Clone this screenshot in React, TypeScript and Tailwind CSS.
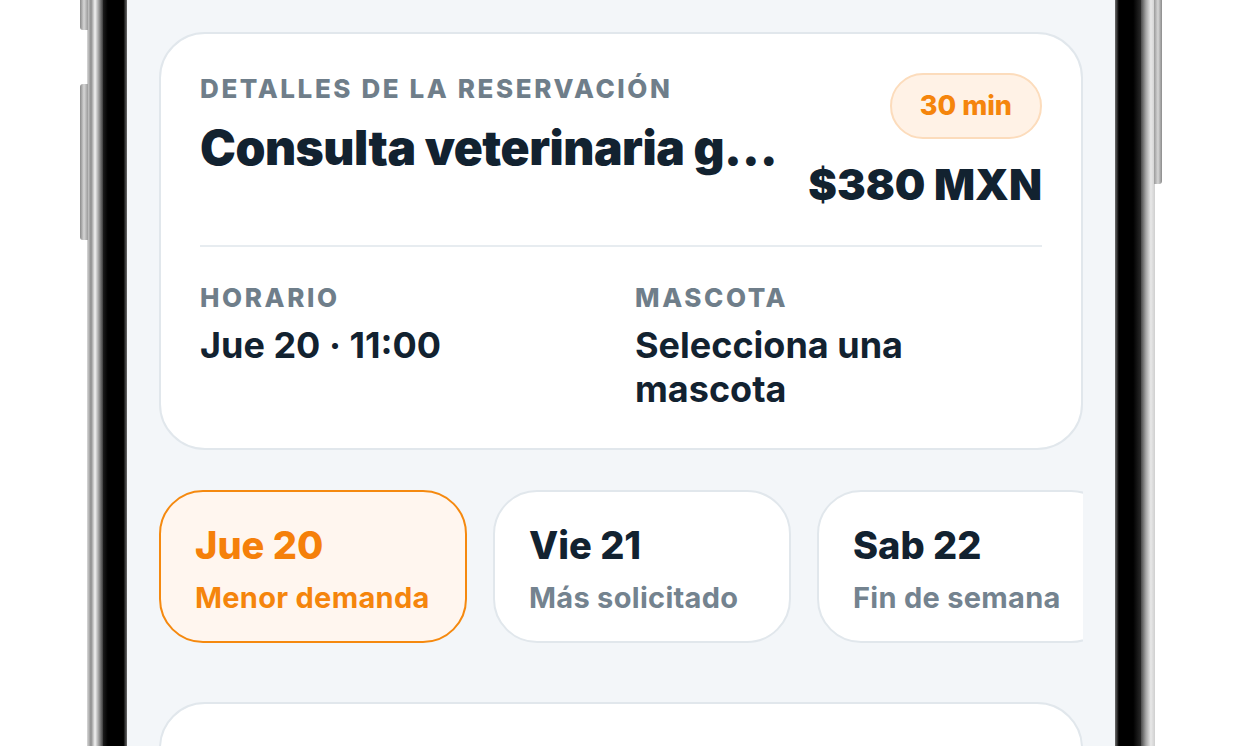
import React from 'react';

const days = [
  { day: 'Jue 20', note: 'Menor demanda', active: true, width: 'w-[308px]' },
  { day: 'Vie 21', note: 'Más solicitado', active: false, width: 'w-[298px]' },
  { day: 'Sab 22', note: 'Fin de semana', active: false, width: 'w-[298px]' },
];

const App = () => {
  return (
    <div className="h-[746px] w-[1242px] overflow-hidden bg-white font-['Inter',sans-serif]">
      <div className="relative ml-[87px] flex h-full w-[1068px]">
        {/* side buttons */}
        <div className="absolute -left-[7px] -top-4 h-[46px] w-[8px] rounded-l-[3px] bg-[linear-gradient(90deg,#8a8a8a,#d6d6d6,#9b9b9b)]" />
        <div className="absolute -left-[7px] top-[84px] h-[156px] w-[8px] rounded-l-[3px] bg-[linear-gradient(90deg,#8a8a8a,#d6d6d6,#9b9b9b)]" />
        <div className="absolute -right-[7px] -top-4 h-[200px] w-[8px] rounded-r-[3px] bg-[linear-gradient(90deg,#9b9b9b,#d6d6d6,#8a8a8a)]" />

        {/* frame left */}
        <div className="w-[16px] shrink-0 bg-[linear-gradient(90deg,#d9d9d9,#8c8c8c_25%,#f2f2f2_50%,#9a9a9a_75%,#3c3c3c)]" />
        <div className="w-[24px] shrink-0 bg-[linear-gradient(90deg,#1c1c1c,#000_20%,#000_85%,#6d6d6d)]" />

        {/* screen */}
        <div className="flex w-[988px] shrink-0 flex-col bg-[#f3f6f9] px-8 pt-8">
          {/* reservation card */}
          <div className="shrink-0 rounded-[46px] border-2 border-[#e1e7ec] bg-white px-[39px] pt-[39px] pb-[37px]">
            <div className="flex items-start justify-between gap-2">
              <div className="min-w-0 flex-1">
                <p className="text-[26px] font-extrabold uppercase leading-[32px] tracking-[0.1em] text-[#6f7e8a]">
                  Detalles de la reservación
                </p>
                <h1 className="mt-[14px] truncate text-[48px] font-black leading-[58px] tracking-[-0.01em] text-[#122230]">
                  Consulta veterinaria general
                </h1>
              </div>
              <div className="flex shrink-0 flex-col items-end">
                <span className="flex h-[66px] items-center rounded-full border-2 border-[#fcdcbc] bg-[#fff2e6] px-7 text-[27px] font-extrabold text-[#f5850c]">
                  30 min
                </span>
                <span className="mt-[19px] text-[43px] font-black leading-[53px] text-[#122230]">
                  $380 MXN
                </span>
              </div>
            </div>

            <div className="mt-[34px] h-[2px] bg-[#e7ecf0]" />

            <div className="mt-[35px] grid grid-cols-2 gap-x-7">
              <div>
                <p className="text-[26px] font-extrabold uppercase leading-[31px] tracking-[0.1em] text-[#6f7e8a]">
                  Horario
                </p>
                <p className="mt-[10px] text-[36px] font-bold leading-[44px] text-[#122230]">
                  Jue 20 · 11:00
                </p>
              </div>
              <div>
                <p className="text-[26px] font-extrabold uppercase leading-[31px] tracking-[0.1em] text-[#6f7e8a]">
                  Mascota
                </p>
                <p className="mt-[10px] text-[36px] font-bold leading-[44px] text-[#122230]">
                  Selecciona una mascota
                </p>
              </div>
            </div>
          </div>

          {/* day chips */}
          <div className="mt-[40px] flex shrink-0 gap-[26px] overflow-hidden">
            {days.map((d) => (
              <div
                key={d.day}
                className={
                  d.active
                    ? `${d.width} shrink-0 rounded-[44px] border-2 border-[#f5890f] bg-[#fff6ef] pl-[34px] pt-[29px] pb-[26px]`
                    : `${d.width} shrink-0 rounded-[44px] border-2 border-[#e1e7ec] bg-white pl-[34px] pt-[29px] pb-[26px]`
                }
              >
                <p className={d.active ? 'text-[38px] font-extrabold leading-[48px] text-[#f5800a]' : 'text-[38px] font-extrabold leading-[48px] text-[#122230]'}>
                  {d.day}
                </p>
                <p className={d.active ? 'mt-[11px] text-[29px] font-bold leading-[35px] tracking-[0.01em] text-[#f5850c]' : 'mt-[11px] text-[29px] font-bold leading-[35px] tracking-[0.01em] text-[#74838f]'}>
                  {d.note}
                </p>
              </div>
            ))}
          </div>

          {/* next card */}
          <div className="mt-[59px] h-[200px] shrink-0 rounded-[46px] border-2 border-[#e1e7ec] bg-white" />
        </div>

        {/* frame right */}
        <div className="w-[26px] shrink-0 bg-[linear-gradient(90deg,#6d6d6d,#000_15%,#000_70%,#2a2a2a)]" />
        <div className="w-[14px] shrink-0 bg-[linear-gradient(90deg,#4a4a4a,#a5a5a5_35%,#e8e8e8_70%,#cfcfcf)]" />
      </div>
    </div>
  );
};

export default App;
